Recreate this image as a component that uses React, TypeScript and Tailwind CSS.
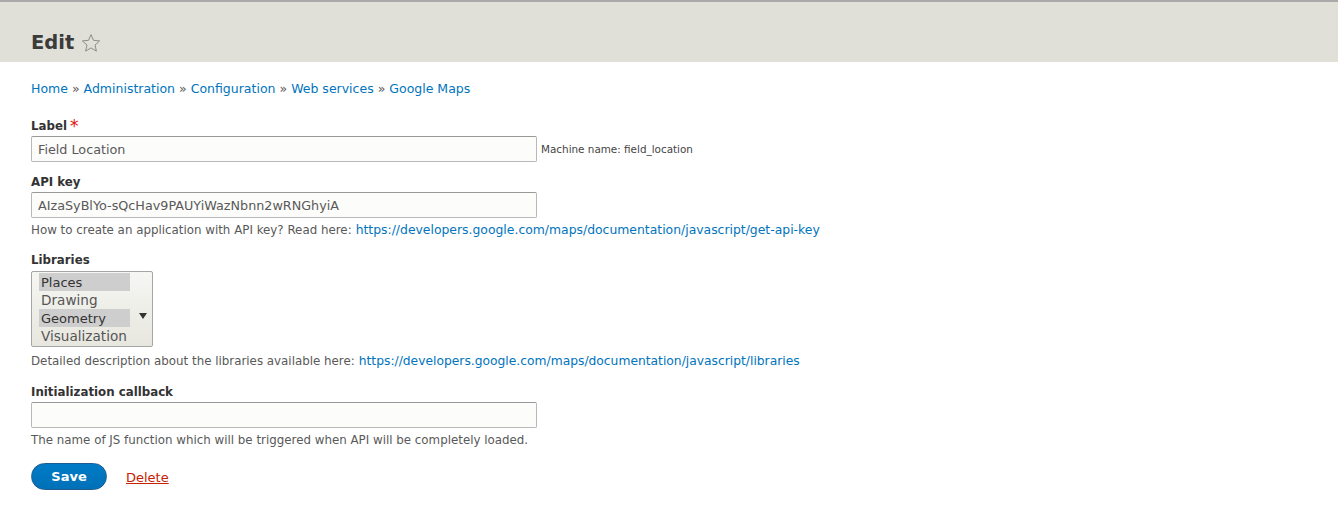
const font = "font-['DejaVu_Sans',sans-serif]";

const Field = ({ label, required }: { label: string; required?: boolean }) => (
  <div className="flex h-[20px] items-center text-[11.8px] font-bold leading-[20px] text-[#333]">
    {label}
    {required && <span className="ml-[3px] text-[17px] font-normal leading-none text-[#e3120b]">*</span>}
  </div>
);

const TextBox = ({ value }: { value: string }) => (
  <input
    readOnly
    value={value}
    className="h-[26px] w-[506px] rounded-[2px] border border-[#b8b8b8] border-t-[#999] bg-[#fcfcfa] px-[6px] text-[12.75px] text-[#595959] outline-none"
  />
);

const Help = ({ text, link, linkClass }: { text: string; link?: string; linkClass?: string }) => (
  <p className="mt-[3px] h-[18px] text-[11.85px] leading-[18px] text-[#595959]">
    {text}
    {link && <a className={`ml-[4px] text-[#0074bd] ${linkClass}`}>{link}</a>}
  </p>
);

const options = [
  { name: "Places", on: true },
  { name: "Drawing", on: false },
  { name: "Geometry", on: true },
  { name: "Visualization", on: false },
];

export default function App() {
  return (
    <div className={`${font} min-h-[510px] bg-white text-[#333]`}>
      {/* Header */}
      <header className="h-[62px] border-t-2 border-[#aaa] bg-[#e0e0d8] px-[31px] pt-[27px]">
        <div className="flex items-center gap-[7px]">
          <h1 className="text-[19.5px] font-bold leading-[28px] text-[#3b3b3b]">Edit</h1>
          <svg width="20" height="20" viewBox="0 0 20 20" fill="none" stroke="#8d8d84" strokeWidth="1">
            <path d="M10 1.6l2.5 5.7 6.1.6-4.6 4.1 1.4 6.1-5.4-3.2-5.4 3.2 1.4-6.1-4.6-4.1 6.1-.6z" />
          </svg>
        </div>
      </header>

      <main className="px-[31px]">
        {/* Breadcrumb */}
        <nav className="mt-[18px] flex h-[18px] items-center gap-[4px] text-[12.5px] leading-[18px] text-[#0074bd]">
          <a>Home</a>
          <span className="text-[#595959]">»</span>
          <a>Administration</a>
          <span className="text-[#595959]">»</span>
          <a>Configuration</a>
          <span className="text-[#595959]">»</span>
          <a>Web services</a>
          <span className="text-[#595959]">»</span>
          <a>Google Maps</a>
        </nav>

        <form className="mt-[18px]">
          {/* Label */}
          <Field label="Label" required />
          <div className="flex items-center gap-[4px]">
            <TextBox value="Field Location" />
            <span className="mt-[1px] text-[10.4px] text-[#444]">Machine name: field_location</span>
          </div>

          {/* API key */}
          <div className="mt-[10px]">
            <Field label="API key" />
            <TextBox value="AIzaSyBlYo-sQcHav9PAUYiWazNbnn2wRNGhyiA" />
            <Help
              text="How to create an application with API key? Read here:"
              link="https://developers.google.com/maps/documentation/javascript/get-api-key"
              linkClass="text-[12.4px]"
            />
          </div>

          {/* Libraries */}
          <div className="mt-[11px]">
            <Field label="Libraries" />
            <div className="relative mb-[5px] mt-[1px] h-[76px] w-[122px] rounded-[2px] border border-[#a6a6a6] bg-gradient-to-b from-[#f6f6f3] to-[#e7e7df] pl-[7px] pt-[1px]">
              {options.map((o) => (
                <div
                  key={o.name}
                  className={`h-[18px] w-[91px] pl-[2px] ${o.on ? "bg-[#cecece] pt-[1px] text-[13px] leading-[17px] text-[#333]" : "text-[13.6px] leading-[18px] text-[#555]"}`}
                >
                  {o.name}
                </div>
              ))}
              <svg className="absolute right-[4px] top-[41px]" width="10" height="7" viewBox="0 0 10 7" fill="#333">
                <path d="M1 0h8L5 6z" />
              </svg>
            </div>
            <Help
              text="Detailed description about the libraries available here:"
              link="https://developers.google.com/maps/documentation/javascript/libraries"
              linkClass="text-[12.3px]"
            />
          </div>

          {/* Callback */}
          <div className="mt-[12px]">
            <Field label="Initialization callback" />
            <TextBox value="" />
            <Help text="The name of JS function which will be triggered when API will be completely loaded." />
          </div>

          {/* Actions */}
          <div className="mt-[14px] flex items-center gap-[19px]">
            <button
              type="button"
              className="h-[27px] w-[76px] rounded-[14px] border border-[#1e5c90] bg-gradient-to-b from-[#007bc6] to-[#0071b8] text-[13px] font-bold text-white"
            >
              Save
            </button>
            <a className="mt-[3px] text-[13px] text-[#c72100] underline">Delete</a>
          </div>
        </form>
      </main>
    </div>
  );
}
